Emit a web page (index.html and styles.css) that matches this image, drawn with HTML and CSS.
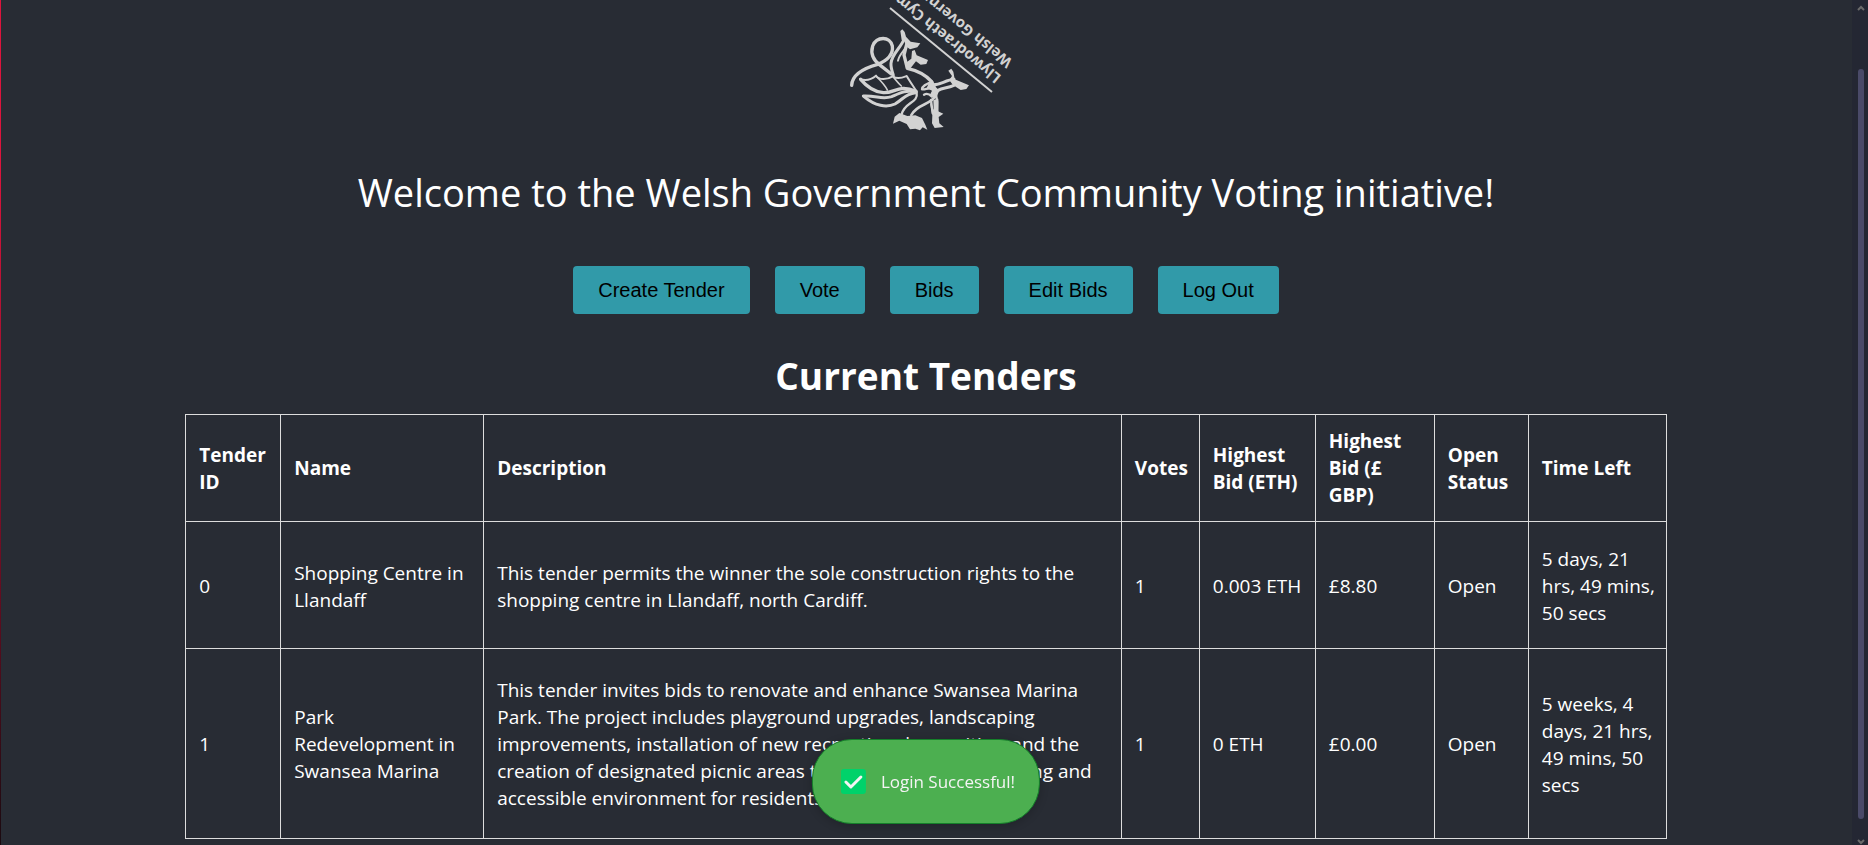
FILE: index.html
```html
<!DOCTYPE html>
<html lang="en">
<head>
<meta charset="utf-8">
<title>Community Voting</title>
<link rel="stylesheet" href="styles.css">
</head>
<body>
<div class="shell">
  <main class="page">
    <svg class="logo" viewBox="-4 0 200 140" role="img" aria-label="Llywodraeth Cymru Welsh Government">
      <path d="M60 8 L162 92" stroke="#d2d2d2" stroke-width="2"/>
      <g transform="scale(.33333)" fill="none" stroke="#d2d2d2" stroke-width="8" stroke-linecap="round" stroke-linejoin="round">
        <path stroke-width="10" d="M65 256 C66 225 100 205 143 193 C175 180 190 160 187 138 C180 108 140 108 128 138 C120 165 135 185 152 197 L184 222"/>
        <path stroke-width="9" d="M222 118 C212 145 186 160 183 190 C182 202 186 212 190 226"/>
        <path stroke-width="6" d="M232 130 C228 150 208 160 204 182"/>
        <path stroke-width="10" d="M232 125 L222 165 L232 205 C255 210 285 222 305 245"/>
        <path stroke-width="6" d="M90 237 C108 243 125 238 138 227 C146 240 170 240 188 229 C205 240 220 232 230 228 C240 245 252 262 260 275"/>
        <path stroke-width="5" d="M138 228 C150 240 165 255 172 270 M189 230 C198 240 205 250 214 258"/>
        <path stroke-width="10" d="M92 238 C112 262 135 276 160 278 C195 280 205 252 258 274"/>
        <path stroke-width="9" d="M100 288 C140 286 155 300 185 290 C212 278 225 270 258 276"/>
        <path stroke-width="9" d="M102 290 C135 318 170 324 195 312 C222 296 225 282 256 278"/>
        <path stroke-width="7" d="M260 278 C266 310 222 305 214 345"/>
        <path stroke-width="8" d="M318 285 C305 315 262 310 244 345"/>
        <path stroke-width="7" d="M305 245 C290 252 276 258 276 268 C285 270 295 262 305 266 M282 284 C292 278 300 284 306 290"/>
        <path stroke-width="9" d="M300 252 C320 262 345 240 372 238 M308 284 C325 262 345 268 372 256"/>
        <path stroke-width="7" d="M318 285 L322 305 M303 300 L308 340 M322 305 L322 340"/>
      </g>
      <g transform="scale(.33333)" fill="#d2d2d2">
        <path d="M211 93 L217 88 L224 96 L228 110 L242 125 L271 130 L262 142 L240 148 L230 140 L222 122 L215 120Z"/>
        <path d="M246 153 L254 150 L260 166 L294 180 L289 192 L272 194 L258 184 L242 204 L228 206 L226 190 L244 176Z"/>
        <path d="M355 212 L364 206 L370 215 L374 238 L417 256 L409 267 L392 270 L368 254 L358 240 L366 228Z"/>
        <path d="M189 371 L194 350 L208 339 L232 348 L256 346 L276 354 L286 374 L292 389 L278 382 L270 391 L256 386 L240 388 L230 372 L208 362Z"/>
        <path d="M299 305 L311 330 L310 300 L325 296 L324 334 L340 341 L326 351 L328 370 L341 381 L314 384 L306 370 L307 346Z"/>
        <path d="M296 250 L310 244 L318 262 L328 272 L318 294 L298 288 L306 272 L290 264Z"/>
      </g>
      <g class="logo-text" fill="#d2d2d2" transform="translate(172 76) rotate(219)">
        <text x="0" y="0">Llywodraeth Cymru</text>
        <text x="1" y="19">Welsh Government</text>
      </g>
    </svg>
    <h1 class="welcome">Welcome to the Welsh Government Community Voting initiative!</h1>
    <nav class="actions">
      <button type="button">Create Tender</button>
      <button type="button">Vote</button>
      <button type="button">Bids</button>
      <button type="button">Edit Bids</button>
      <button type="button">Log Out</button>
    </nav>
    <h2 class="subtitle">Current Tenders</h2>
    <table class="tenders">
      <colgroup>
        <col class="c-id"><col class="c-name"><col class="c-desc"><col class="c-votes"><col class="c-eth"><col class="c-gbp"><col class="c-open"><col class="c-time">
      </colgroup>
      <thead>
        <tr><th>Tender ID</th><th>Name</th><th>Description</th><th>Votes</th><th>Highest Bid (ETH)</th><th>Highest Bid (£ GBP)</th><th>Open Status</th><th>Time Left</th></tr>
      </thead>
      <tbody>
        <tr>
          <td>0</td><td>Shopping Centre in Llandaff</td>
          <td>This tender permits the winner the sole construction rights to the shopping centre in Llandaff, north Cardiff.</td>
          <td>1</td><td>0.003 ETH</td><td>£8.80</td><td>Open</td><td>5 days, 21 hrs, 49 mins, 50 secs</td>
        </tr>
        <tr class="long">
          <td>1</td><td>Park Redevelopment in Swansea Marina</td>
          <td>This tender invites bids to renovate and enhance Swansea Marina Park. The project includes playground upgrades, landscaping improvements, installation of new recreational amenities, and the creation of designated picnic areas to foster a more welcoming and accessible environment for residents.</td>
          <td>1</td><td>0 ETH</td><td>£0.00</td><td>Open</td><td>5 weeks, 4 days, 21 hrs, 49 mins, 50 secs</td>
        </tr>
      </tbody>
    </table>
    <div class="toast" role="status">
      <svg class="tick" viewBox="0 0 25 25" aria-hidden="true"><rect width="25" height="25" rx="3" fill="#00d26a"/><path d="M5 13 L10 18 L20 8" fill="none" stroke="#f4f4f4" stroke-width="3" stroke-linecap="round" stroke-linejoin="round"/></svg>
      <span>Login Successful!</span>
    </div>
  </main>
  <div class="scrollbar" aria-hidden="true">
    <svg viewBox="0 0 8 6"><path d="M1 5 L4 2 L7 5" fill="none" stroke="#6b6b6b" stroke-width="2"/></svg>
    <div class="thumb"></div>
    <svg viewBox="0 0 8 6"><path d="M1 1 L4 4 L7 1" fill="none" stroke="#6b6b6b" stroke-width="2"/></svg>
  </div>
</div>
</body>
</html>
```
FILE: styles.css
```css
* { box-sizing: border-box; }
body {
  margin: 0;
  background: #282c34;
  color: #fff;
  font-family: "Segoe UI", "Open Sans", "Noto Sans", sans-serif;
}
.shell {
  display: flex;
  height: 100vh;
  overflow: hidden;
  background: linear-gradient(#dc143c, #dc143c 20%, #1a0a10) left / 1px 100% no-repeat;
}
.page {
  flex: 1;
  display: flex;
  flex-direction: column;
  align-items: center;
}
.logo { width: 200px; height: 140px; flex: none; }
.logo-text { font: bold 15px "Open Sans", sans-serif; }
.welcome { margin: 24px 0 0; font-size: 38px; font-weight: 400; line-height: 56px; }
.actions { display: flex; gap: 25px; margin-top: 46px; }
.actions button {
  padding: 12px 25px;
  border: 0;
  border-radius: 4px;
  background: #319aa9;
  color: #000;
  font: 20px/24px Arial, "Liberation Sans", sans-serif;
}
.subtitle { margin: 34px 0 10px; font-size: 37px; line-height: 56px; }
.tenders {
  width: 80%;
  flex: none;
  table-layout: fixed;
  border-collapse: collapse;
  font-size: 19px;
  line-height: 27px;
  text-align: left;
}
.tenders th, .tenders td { border: 1px solid #ddd; padding: 13px 10px 12px 13px; }
.tenders td { padding-block: 24px 21px; }
.tenders .long td { padding-block: 28px 26px; }
.c-id { width: 95px; }
.c-name { width: 203px; }
.c-votes { width: 78px; }
.c-eth { width: 116px; }
.c-gbp { width: 119px; }
.c-open { width: 94px; }
.c-time { width: 138px; }
.toast {
  position: fixed;
  bottom: 21px;
  left: calc(50% - 8px);
  transform: translateX(-50%);
  display: flex;
  align-items: center;
  gap: 15px;
  height: 85px;
  padding: 0 24px 0 28px;
  border: 1px solid #15802a;
  border-radius: 40px;
  background: #4caf50;
  box-shadow: 0 2px 10px rgba(0, 0, 0, .2);
  color: #f4f4f4;
  font-size: 17px;
  white-space: nowrap;
}
.tick { width: 25px; height: 25px; }
.scrollbar {
  width: 16px;
  flex: none;
  display: flex;
  flex-direction: column;
  justify-content: space-between;
  align-items: center;
  padding: 5px 0 0 2px;
  background: #242733;
}
.scrollbar svg { width: 8px; height: 6px; flex: none; }
.thumb { width: 6px; flex: 1; margin: 58px 0 20px; border-radius: 3px; background: #4a4a68; }
```
